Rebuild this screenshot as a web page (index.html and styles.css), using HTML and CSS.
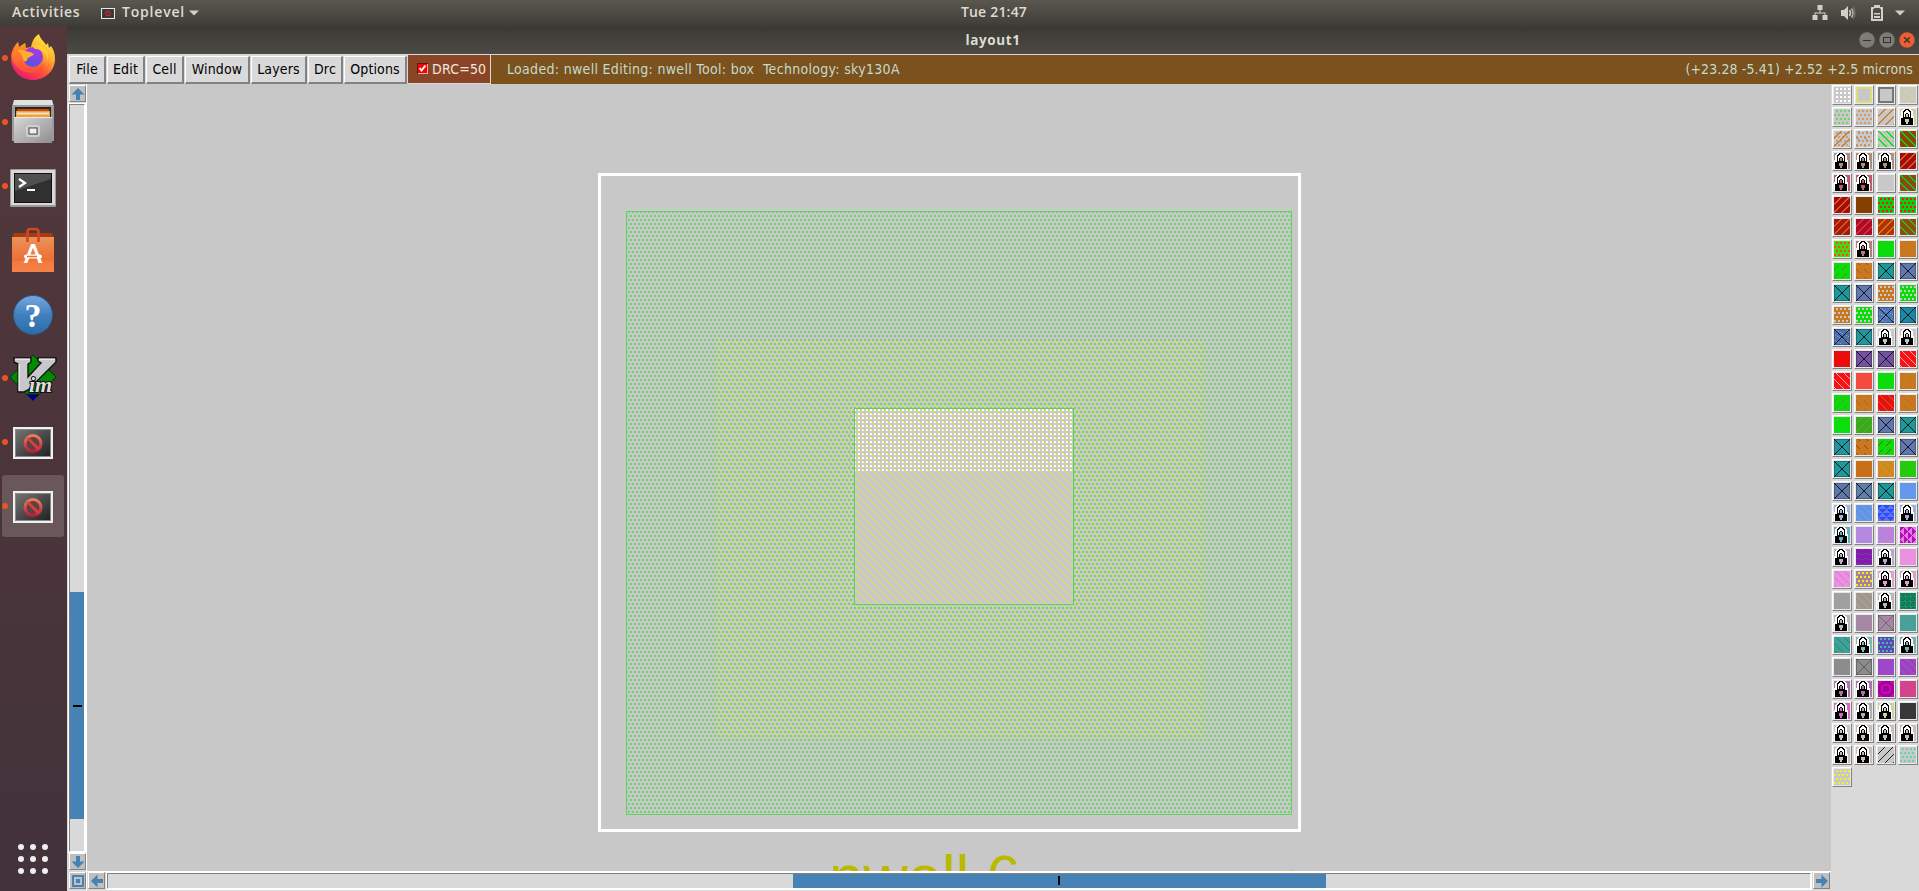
FILE: index.html
```html
<!DOCTYPE html>
<html lang="en">
<head>
<meta charset="utf-8">
<title>layout1</title>
<link rel="stylesheet" href="styles.css">
</head>
<body>
<header class="topbar">
  <div class="top-left">
    <span class="activities">Activities</span>
    <svg class="app-icon" width="14" height="11" viewBox="0 0 14 11"><rect x=".5" y=".5" width="13" height="10" fill="#3a3a3a" stroke="#e8e8e8"/><circle cx="7" cy="5.5" r="2.3" fill="#5a2020" stroke="#c8323c"/><path d="M5.2 3.7l3.6 3.6" stroke="#c8323c"/></svg>
    <span class="app-name">Toplevel</span>
    <svg class="caret" width="10" height="6" viewBox="0 0 10 6"><path d="M0 .5h10L5 5.5z" fill="#cfcec9"/></svg>
  </div>
  <div class="clock">Tue 21:47</div>
  <div class="tray">
    <svg width="16" height="16" viewBox="0 0 16 16" fill="#d0cfca"><path d="M5.500 0h5v5h-5zM.5 10h5v5h-5zM10.500 10h5v5h-5zM7.500 5h1v2.500h5V10h-1V8.500h-9V10h-1V7.500h5z"/></svg>
    <svg width="16" height="16" viewBox="0 0 16 16"><path d="M1 5h3l4-4v14l-4-4H1z" fill="#d0cfca"/><path d="M9.500 5q2 3 0 6" fill="none" stroke="#d0cfca" stroke-width="1.500"/><path d="M11.500 3.500q3 4.500 0 9" fill="none" stroke="#b5b4af" stroke-width="1.500"/><path d="M13.300 2q3.200 6 0 12" fill="none" stroke="#777670" stroke-width="1.200"/></svg>
    <svg width="12" height="16" viewBox="0 0 12 16"><path d="M3 0h6v2h3v14H0V2h3zM2 4.500V14h8V4.500L8.500 3h-5z" fill="#d0cfca" fill-rule="evenodd"/><path d="M3 8h6v1.500H3zM3 11h6v2H3z" fill="#d0cfca"/></svg>
    <svg width="10" height="6" viewBox="0 0 10 6"><path d="M0 .5h10L5 5.500z" fill="#cfcec9"/></svg>
  </div>
</header>
<div class="desktop">
  <nav class="dock">
    <div class="dock-item h-firefox run">
      <svg width="46" height="48" viewBox="0 0 46 48">
        <defs>
          <linearGradient id="fx" x1=".8" y1="0" x2=".2" y2="1"><stop offset="0" stop-color="#fff04a"/><stop offset=".35" stop-color="#ffb02c"/><stop offset=".65" stop-color="#ff5038"/><stop offset="1" stop-color="#e8107c"/></linearGradient>
          <linearGradient id="fo" x1="0" y1="0" x2="0" y2="1"><stop offset="0" stop-color="#ff9820"/><stop offset="1" stop-color="#ff4a40"/></linearGradient>
          <linearGradient id="fp" x1=".6" y1="0" x2=".3" y2="1"><stop offset="0" stop-color="#b434e8"/><stop offset="1" stop-color="#4c58e0"/></linearGradient>
        </defs>
        <path d="M29 1c1 5 5 7 7 11l2-2 1 5 2-2c3 4 4 8 4 13 0 12-10 21-22 21S1 38 1 25c0-7 3-12 7-16l1 5 6-4 1 5 5-1c1-5 3-10 8-13z" fill="url(#fx)"/>
        <path d="M2 20l6-11 1 6 6-5 1 6 6 0-5 8c0 9 12 12 18 6-3 9-15 13-24 7C5 32 1 28 2 20z" fill="url(#fo)"/>
        <path d="M22 13c11-3 19 7 15 17 2-8-2-12-7-13z" fill="#ffd83a"/>
        <circle cx="23" cy="24" r="10" fill="url(#fp)"/>
        <path d="M7 17c6-1 8 2 13 2l4 2c-2 3-6 2-7 6-1 3-4 1-4-1-1-4-3-7-6-9z" fill="#ffad28"/>
        <path d="M22 13c5-1 10 2 12 7-3-3-5-4-9-4z" fill="#ffc52e"/>
      </svg>
    </div>
    <div class="dock-item h-files run">
      <svg width="42" height="46" viewBox="0 0 42 46">
        <defs><linearGradient id="fl" x1="0" y1="0" x2="1" y2="1"><stop offset="0" stop-color="#d8d8d8"/><stop offset="1" stop-color="#8e8e8e"/></linearGradient></defs>
        <path d="M2 1h38l2 6v35H0V7z" fill="#9b9b9b"/><path d="M2 1h38l1 5H1z" fill="#e0e0e0"/>
        <rect x="3" y="8" width="36" height="11" fill="#252525"/><path d="M5 10h32v3H5z" fill="#c44a12"/><path d="M4 12h34v6H4z" fill="#f0a040"/><path d="M5 13.500h32v2H5z" fill="#f6e3c0"/>
        <rect x="2" y="18" width="38" height="26" fill="url(#fl)"/><path d="M2 18.500h38" stroke="#ececec"/>
        <rect x="15" y="27" width="12" height="10" rx="1.500" fill="none" stroke="#cfcfcf" stroke-width="2"/><rect x="17" y="29" width="8" height="6" fill="#eee" stroke="#505050"/>
      </svg>
    </div>
    <div class="dock-item h-term run">
      <svg width="46" height="38" viewBox="0 0 46 38">
        <rect width="46" height="38" rx="1" fill="#9a9a9a"/><rect x="1" y="1" width="44" height="35" fill="#d8d8d8"/><rect x="4" y="4" width="38" height="30" fill="#111"/><rect x="5" y="5" width="36" height="28" fill="#303030"/><path d="M5 5h36v5L5 22z" fill="#505050"/>
        <path d="M9 10l6 4-6 4" fill="none" stroke="#fff" stroke-width="2.200"/><path d="M17 21h8" stroke="#fff" stroke-width="2"/>
      </svg>
    </div>
    <div class="dock-item h-soft">
      <svg width="42" height="46" viewBox="0 0 42 46">
        <defs><linearGradient id="sf" x1="0" y1="0" x2="0" y2="1"><stop offset="0" stop-color="#e8935c"/><stop offset=".65" stop-color="#ee6f32"/><stop offset=".7" stop-color="#f47a3c"/><stop offset="1" stop-color="#f4824a"/></linearGradient></defs>
        <path d="M2 6h38l2 5H0z" fill="#a83a12"/><rect y="10" width="42" height="35" fill="url(#sf)"/>
        <path d="M15.500 15V5q0-3 3-3h5q3 0 3 3v10" fill="none" stroke="#d2481c" stroke-width="2.600"/>
        <text x="21" y="36" text-anchor="middle" class="soft-a">A</text><path d="M14 29.500h14" stroke="#fff" stroke-width="4" stroke-linecap="round"/><path d="M15 29.500h10" stroke="#ee6f32" stroke-width="1.500"/>
      </svg>
    </div>
    <div class="dock-item h-help">
      <svg width="42" height="42" viewBox="0 0 42 42">
        <defs><linearGradient id="hp" x1="0" y1="0" x2="0" y2="1"><stop offset="0" stop-color="#78a8de"/><stop offset=".5" stop-color="#4080c0"/><stop offset="1" stop-color="#2c6ca4"/></linearGradient></defs>
        <circle cx="21" cy="21" r="19.500" fill="url(#hp)" stroke="#2a5a8c"/><text x="21" y="33" text-anchor="middle" class="help-q">?</text>
      </svg>
    </div>
    <div class="dock-item h-vim run">
      <svg width="48" height="48" viewBox="0 0 48 48">
        <path d="M24 1l23 22-23 24L1 23z" fill="#000080"/><path d="M24 1l23 22-16 17H17L1 23z" fill="#008a00" stroke="#003800"/>
        <path d="M5 4h17v4l-3 2v13L32 9l-3-2V4h18v4L19 36l-4 2H9V10L5 8z" fill="#c8c8cc" stroke="#111" stroke-width="1.400"/>
        <path d="M6 5h15M30 5h16M10 10v27" stroke="#fff"/>
        <text x="20" y="38" class="vim-im">im</text>
      </svg>
    </div>
    <div class="dock-item h-win run">
      <svg width="40" height="32" viewBox="0 0 40 32"><use href="#winicon"/></svg>
    </div>
    <div class="dock-item h-win run active">
      <svg width="40" height="32" viewBox="0 0 40 32">
        <defs>
          <linearGradient id="wg" x1="0" y1="0" x2="1" y2="1"><stop offset="0" stop-color="#747474"/><stop offset="1" stop-color="#222"/></linearGradient>
          <linearGradient id="wr" x1="0" y1="0" x2="0" y2="1"><stop offset="0" stop-color="#e88058"/><stop offset="1" stop-color="#c01c3c"/></linearGradient>
          <g id="winicon"><rect x="1" y="1" width="38" height="30" fill="#888" stroke="#f0f0f0" stroke-width="2"/><rect x="3" y="3" width="34" height="26" fill="url(#wg)"/><circle cx="20" cy="16.500" r="8" fill="#5c4244" stroke="url(#wr)" stroke-width="3"/><path d="M14.500 11l11 11" stroke="#d64040" stroke-width="3"/></g>
        </defs>
        <use href="#winicon"/>
      </svg>
    </div>
    <svg class="apps" width="32" height="32" viewBox="0 0 32 32" fill="#eee"><circle cx="4" cy="4" r="3"/><circle cx="16" cy="4" r="3"/><circle cx="28" cy="4" r="3"/><circle cx="4" cy="16" r="3"/><circle cx="16" cy="16" r="3"/><circle cx="28" cy="16" r="3"/><circle cx="4" cy="28" r="3"/><circle cx="16" cy="28" r="3"/><circle cx="28" cy="28" r="3"/></svg>
  </nav>
  <main class="window">
    <div class="titlebar">
      <span class="title">layout1</span>
      <div class="win-buttons">
        <svg width="16" height="16" viewBox="0 0 16 16"><circle cx="8" cy="8" r="7.700" fill="#7d7c75"/><path d="M4 8.500h8" stroke="#32312e"/></svg>
        <svg width="16" height="16" viewBox="0 0 16 16"><circle cx="8" cy="8" r="7.700" fill="#7d7c75"/><rect x="4.500" y="5.500" width="7" height="5" fill="none" stroke="#32312e"/></svg>
        <svg width="16" height="16" viewBox="0 0 16 16"><circle cx="8" cy="8" r="7.700" fill="#ec5f33"/><path d="M5.200 5.200l5.600 5.600M10.800 5.200l-5.600 5.600" stroke="#32312e" stroke-width="1.300"/></svg>
      </div>
    </div>
    <div class="menubar">
      <div class="menus">
        <button class="menu w-file">File</button><button class="menu w-edit">Edit</button><button class="menu w-cell">Cell</button><button class="menu w-window">Window</button><button class="menu w-layers">Layers</button><button class="menu w-drc">Drc</button><button class="menu w-options">Options</button>
      </div>
      <div class="drc"><svg width="11" height="11" viewBox="0 0 11 11"><rect width="11" height="11" fill="#e8b0a8"/><path d="M0 0h11v1H1v10H0z" fill="#5c1c10"/><rect x="1" y="1" width="9" height="9" fill="#f00"/><path d="M2.500 5l2 2.500 4-5" fill="none" stroke="#fff" stroke-width="2"/></svg><span>DRC=50</span></div>
      <div class="status"><span class="status-text">Loaded: nwell Editing: nwell Tool: box&nbsp; Technology: sky130A</span><span class="coords">(+23.28 -5.41) +2.52 +2.5 microns</span></div>
    </div>
    <div class="work">
      <div class="vscroll">
        <div class="sbtn"><svg width="14" height="14" viewBox="0 0 14 14"><path d="M7 1l6.500 6.500H9V13H5V7.500H.5z"/></svg></div>
        <div class="vtrough"><div class="vthumb"><i></i></div></div>
        <div class="sbtn"><svg width="14" height="14" viewBox="0 0 14 14"><path d="M7 13l6.500-6.500H9V1H5v5.500H.5z"/></svg></div>
        <div class="sbtn corner"><svg width="14" height="14" viewBox="0 0 14 14"><path fill-rule="evenodd" d="M1 1h12v12H1zM3 3v8h8V3zM5 5h4v4H5z"/></svg></div>
      </div>
      <div class="center">
        <svg class="canvas" width="1744" height="787" viewBox="87 84 1744 787" shape-rendering="crispEdges">
          <defs>
            <pattern id="nwell" width="4" height="8" patternUnits="userSpaceOnUse"><path d="M0 3h2v2H0zM2 7h2v1H2zM2 0h2v1H2z" fill="#5fd75f"/></pattern>
            <pattern id="hatch" width="8" height="8" patternUnits="userSpaceOnUse"><path d="M2 0h1v1h-1zM3 1h1v1h-1zM4 2h1v1h-1zM5 3h1v1h-1zM6 4h1v1h-1zM7 5h1v1h-1zM0 6h1v1h-1zM1 7h1v1h-1z" fill="#ebe53c"/></pattern>
            <pattern id="grid" width="4" height="4" patternUnits="userSpaceOnUse"><path d="M2 1h2v2H2z" fill="#fff"/></pattern>
          </defs>
          <rect x="599.500" y="174.500" width="700" height="656" fill="none" stroke="#fff" stroke-width="3"/>
          <path d="M715 339h491v401H715zM854 408v197h220V408z" fill="url(#hatch)" fill-rule="evenodd"/>
          <path d="M626 211h666v604H626zM854 408v197h220V408z" fill="url(#nwell)" fill-rule="evenodd" fill-opacity=".88"/>
          <rect x="626.500" y="211.500" width="665" height="603" fill="none" stroke="#5fd75f"/>
          <rect x="855" y="409" width="218" height="62" fill="url(#grid)"/>
          <rect x="855" y="409" width="218" height="195" fill="url(#hatch)"/>
          <rect x="854.500" y="408.500" width="219" height="196" fill="none" stroke="#50d850"/>
          <rect x="1291" y="870" width="1" height="1" fill="#5fd75f"/>
          <text x="829" y="898" class="rule">nwell.6</text>
        </svg>
        <div class="hscroll">
          <div class="sbtn"><svg width="14" height="14" viewBox="0 0 14 14"><path d="M1 7l6.500-6.500V5H13v4H7.500v4.500z"/></svg></div>
          <div class="htrough"><div class="hthumb"><i></i></div></div>
          <div class="sbtn"><svg width="14" height="14" viewBox="0 0 14 14"><path d="M13 7L6.500.5V5H1v4h5.500v4.500z"/></svg></div>
        </div>
      </div>
      <aside class="layers" id="layers"></aside>
    </div>
  </main>
</div>
<script src="layers.js"></script>
</body>
</html>
```

FILE: styles.css
```css
* { box-sizing: border-box; }
body { margin: 0; width: 1919px; height: 891px; overflow: hidden; display: flex; flex-direction: column; font-family: "DejaVu Sans", sans-serif; background: #d9d9d9; }
svg { display: block; flex: none; }

.topbar { height: 26px; flex: none; display: grid; grid-template-columns: 1fr 200px 1fr; padding-left: 69px; align-items: center; background: linear-gradient(#5a574e, #3e3d38); color: #dfdbd2; font: 600 14px/24px "Open Sans", sans-serif; }
.topbar span, .clock { padding-bottom: 2px; }
.top-left { display: flex; align-items: center; margin-left: -57px; }
.activities { width: 89px; letter-spacing: .7px; }
.app-name { margin: 0 4px 0 7px; letter-spacing: .8px; }
.clock { text-align: center; letter-spacing: .2px; }
.tray { display: flex; align-items: center; justify-content: flex-end; padding-right: 14px; gap: 12px; }
.tray svg:nth-child(2) { margin-right: 3px; }

.desktop { flex: 1; display: flex; min-height: 0; }
.dock { width: 67px; flex: none; display: flex; flex-direction: column; align-items: center; padding-right: 2px; background: linear-gradient(#53383b, #42323a); }
.dock-item { width: 62px; height: 64px; flex: none; display: flex; align-items: center; justify-content: center; position: relative; border-radius: 3px; }
.dock-item.run::before { content: ""; position: absolute; left: 0; top: 29px; width: 6px; height: 6px; border-radius: 50%; background: #e95420; }
.dock-item.active { height: 62px; background: #695759; margin-top: 1px; }
.dock-item.active::before { top: 28px; }
.h-firefox svg { margin-bottom: 3px; }
.h-term svg { margin-top: 4px; }
.h-help svg, .h-win svg { margin-top: 2px; }
.apps { margin-top: auto; margin-bottom: 16px; }
.soft-a { font: 700 26px "Lato", sans-serif; fill: #fff; }
.help-q { font: 700 34px "Liberation Serif", serif; fill: #fff; }
.vim-im { font: italic 700 22px "Liberation Serif", serif; fill: #ddd; stroke: #111; stroke-width: 2px; paint-order: stroke; }

.window { flex: 1; min-width: 0; display: flex; flex-direction: column; }
.titlebar { height: 28px; flex: none; background: linear-gradient(#3a3934, #4b4a44); display: grid; grid-template-columns: 1fr 200px 1fr; align-items: center; color: #dfdbd2; font: 700 13.500px/28px "Open Sans", sans-serif; }
.title { grid-column: 2; text-align: center; letter-spacing: .6px; }
.win-buttons { display: flex; justify-content: flex-end; gap: 4px; padding-right: 4px; }
.menubar { height: 30px; flex: none; display: flex; border-top: 1px solid #d9d9d9; font: condensed 14px/26px "DejaVu Sans Condensed", "DejaVu Sans", sans-serif; }
.menus { display: flex; gap: 1px; padding: 1px 1px 0 2px; background: #d9d9d9; }
.menu { height: 28px; border: 2px solid; border-color: #fff #828282 #828282 #fff; border-left-width: 1px; border-top-width: 1px; background: #d9d9d9; padding: 0 0 1px; font: inherit; line-height: 24px; letter-spacing: .15px; color: #000; text-align: center; }
.w-file { width: 37px; } .w-edit { width: 38px; } .w-cell { width: 38px; } .w-window { width: 65px; } .w-layers { width: 56px; } .w-drc { width: 35px; } .w-options { width: 63px; }
.drc { width: 83px; background: #8a4526; color: #f2e6de; display: flex; align-items: center; gap: 4px; padding: 0 0 1px 9px; border: 1px solid #d9d9d9; border-width: 0 1px 1px 0; letter-spacing: .2px; }
.status { flex: 1; display: flex; justify-content: space-between; align-items: center; background: #7b511e; color: #c4dccb; padding: 0 6px 2px 16px; }
.status-text { letter-spacing: .31px; }
.coords { letter-spacing: .11px; }

.work { flex: 1; display: flex; min-height: 0; }
.vscroll { width: 20px; flex: none; background: #d9d9d9; padding: 1px 1px 1px 2px; display: flex; flex-direction: column; border-right: 1px solid #fff; }
.sbtn { width: 17px; height: 17px; flex: none; background: #bfbfbf; border: 1px solid; border-color: #fff #828282 #828282 #fff; display: flex; align-items: center; justify-content: center; fill: #4682b4; }
.vtrough { width: 16px; flex: 1; margin: 2px 0 1px; border: 1px solid; border-color: #828282 #fff #fff #828282; box-shadow: 0 0 0 1px #fff; }
.vthumb { height: 227px; margin-top: 487px; background: #4682b4; display: flex; align-items: center; justify-content: center; }
.vthumb i { width: 9px; height: 2px; background: #000; }
.corner { margin: 2px 0 1px; }
.center { width: 1744px; flex: none; display: flex; flex-direction: column; }
.canvas { background: #c8c8c8; }
.rule { font: 61.500px "Liberation Sans", sans-serif; fill: #b9b900; }
.hscroll { height: 20px; background: #d9d9d9; display: flex; align-items: center; gap: 2px; border-top: 1px solid #fff; padding: 0 1px 2px 1px; }
.htrough { flex: 1; height: 16px; border: 1px solid; border-color: #828282 #fff #fff #828282; box-shadow: 0 0 0 1px #fff; }
.hthumb { width: 533px; height: 14px; margin-left: 685px; background: #4682b4; display: flex; align-items: center; justify-content: center; }
.hthumb i { width: 2px; height: 9px; margin-right: 1px; background: #000; }
.layers { flex: 1; background: #d9d9d9; display: grid; grid-template-columns: repeat(4, 20px); grid-auto-rows: 20px; gap: 2px; padding: 1px 0 0 1px; align-content: start; }
.layer { border: 1px solid; border-color: #fff #828282 #828282 #fff; background: #e8e8e8; padding: 1px; }
```

FILE: layers.js
```js
// Layer palette: each entry is [kind, background, foreground, secondary]
const O = '#c87820', G = '#0cdc0c', C = '#c8c8c8', T = '#209898', B = '#6078ac', K = '#101820';
const palette = [
  ['grid', C, '#fff'], ['frame', C, '#dcdc78'], ['frame', C, '#787878'], ['back', C, '#e6e046'],
  ['dots', C, '#68d868'], ['dots', C, '#cc9c70'], ['slash2', C, '#cc8038'], ['lock', '#d0d0a8'],
  ['slash2', C, '#cc8038', '#c8a080'], ['sparseb', C, '#b07040', '#cc9c70'], ['back2', C, '#20d820', '#90d890'], ['back2', '#8c4408', '#10d010'],
  ['lock', '#b08c7c'], ['lock', '#b08c7c'], ['lock', '#a89478'], ['slash2', '#a40c10', '#d86018'],
  ['lock', '#c05c6c'], ['lock', '#c05c6c'], ['solid', C], ['back2', '#8c4810', '#10c818'],
  ['slash2', '#a40c10', '#d86018'], ['solid', '#844000'], ['dots', '#08d010', '#e82010'], ['dots', '#08d010', '#e82010'],
  ['slash2', '#a81810', '#c86418'], ['slash2', '#b00828', '#d03838'], ['slash2', '#b43008', '#d08010'], ['back2', '#904c10', '#38b420'],
  ['dots', '#48d810', '#f05020'], ['lock', '#b07c7c'], ['solid', G], ['solid', O],
  ['sparse', G, '#508c10'], ['sparseb', O, '#a05c20'], ['cross', T, K], ['cross', B, K],
  ['cross', T, K], ['cross', B, K], ['dots', O, C], ['dots', G, C],
  ['dots', O, C, '#a05c20'], ['dots', G, C, '#e04040'], ['cross', '#5078b8', K, '#80a0e0'], ['cross', '#1888a0', K, '#4880d8'],
  ['cross', '#5070ac', K, '#80a0e0'], ['cross', T, K, '#4880d8'], ['lock', C], ['lock', C],
  ['solid', '#ec0c0c'], ['cross', '#7850a0', K], ['cross', '#7850a0', K, '#6060b8'], ['back', '#fc1010', '#d0b8d0'],
  ['back', '#fc1010', '#d0b8d0'], ['solid', '#f44a40'], ['solid', G], ['sparseb', O, '#bd701c'],
  ['sparse', '#10d810', '#50a018'], ['sparseb', O, '#a86820'], ['back', '#e81010', '#c86818'], ['back', O, '#bd701c'],
  ['solid', '#0ce00c'], ['slash', '#3ca820', '#40c020'], ['cross', B, K], ['cross', T, K],
  ['cross', T, K, '#4880d8'], ['sparseb', O, '#904800'], ['sparse', G, '#904800'], ['cross', B, K],
  ['cross', T, K], ['solid', '#c87018'], ['back', '#d08c20', '#cc8018'], ['slash', '#24cc0c', '#30c010'],
  ['cross', '#6078a8', K], ['cross', '#6080a8', K], ['cross', T, K], ['solid', '#6498ec'],
  ['lock', '#a0b4e0'], ['back', '#6498e8', '#6884c0'], ['tri', '#0c5cff', '#8068e8'], ['lock', '#a0b0d8'],
  ['lock', '#60b0c0'], ['solid', '#b488e0'], ['back', '#b884e0', '#c878b8'], ['tri2', '#b010b8', '#e878e8'],
  ['lock', '#c0a8d0'], ['wave', '#8818b0', '#6840a0'], ['lock', '#b8a8d0'], ['solid', '#ec90e0'],
  ['back', '#ec90e4', '#d878c0'], ['dots', '#a880a0', '#f0f010'], ['lock', '#e0a0c8'], ['lock', '#e0a0c8'],
  ['solid', '#a0a0a0'], ['back', '#a09c98', '#b08050'], ['lock', '#b8b8b8'], ['noise', '#0c7840', '#1c8c74'],
  ['lock', '#b8b8b8'], ['solid', '#a488a4'], ['cross', '#a488a4', '#706470'], ['solid', '#48a098'],
  ['back', '#40a098', '#308078'], ['lock', '#80b8b8'], ['dots', '#5848b8', '#48b8a8'], ['lock', '#78b0b0'],
  ['solid', '#8c8c8c'], ['cross', '#8c8c8c', '#606060'], ['solid', '#9c48c8'], ['back', '#9c48c8', '#a03090'],
  ['lock', '#b070b0'], ['lock', '#b070b0'], ['ring', '#a000b0', '#c81090'], ['solid', '#d44488'],
  ['lock', '#d868c0'], ['lock', '#b0b0b0'], ['lock', '#d0d0a0'], ['solid', '#383838'],
  ['lock', C], ['lock', '#c8c0b8'], ['lock', '#c8c0b8'], ['lock', '#c8c0b8'],
  ['lock', '#c8c0b8'], ['lock', '#c8c0b8'], ['slash', C, '#202020'], ['dots', C, '#60d8a8'],
  ['dots', C, '#f0f030']
];

const mod = (a, n) => ((a % n) + n) % n;
const tests = {
  grid: (x, y) => mod(x, 4) > 1 && mod(y - 1, 4) < 2,
  dots: (x, y) => mod(y - 1, 4) < 2 && mod(x + (mod(y - 1, 8) < 4 ? 2 : 0), 4) < 2,
  slash: (x, y) => mod(x + y, 8) === 6,
  back: (x, y) => mod(x - y, 8) === 2,
  slash2: (x, y) => mod(x + y, 8) > 5,
  back2: (x, y) => mod(x - y, 8) < 2,
  sparse: (x, y) => mod(x + y, 8) === 6 && mod(x, 8) < 5,
  sparseb: (x, y) => mod(x - y, 8) === 2 && mod(x, 8) < 4,
  cross: (x, y) => x === y || x + y === 15,
  frame: (x, y) => x < 2 || y < 2 || x > 13 || y > 13,
  tri: (x, y) => Math.abs(mod(x + (mod(y, 8) < 4 ? 0 : 4), 8) - 4) <= mod(y, 4),
  tri2: (x, y) => Math.abs(mod(y + (mod(x, 8) < 4 ? 0 : 4), 8) - 4) <= mod(x, 4),
  wave: (x, y) => mod(y + (mod(x, 8) < 4 ? 1 : 0), 5) === 0,
  noise: (x, y) => mod(x * 7 + y * 5 + x * y, 5) < 2,
  ring: (x, y) => { const d = mod(Math.round(Math.hypot(x - 7.5, y - 7.5)), 5); return d === 4 || d === 0; },
  dust: (x, y) => mod(x * 3 + y * 5, 11) === 0
};
function pixels(test, color) {
  let d = '';
  for (let y = 0; y < 16; y++) for (let x = 0; x < 16; x++) if (test(x, y)) d += `M${x} ${y}h1v1h-1z`;
  return `<path d="${d}" fill="${color}"/>`;
}
function lock(bg) {
  return `<path d="M1 16V7h1V2h1V1h1V0h8v1h1v1h1v5h1v9z" fill="#fff"/>
    <path d="M2 16V9h2V2h1V1h1V0h4v1h1v1h1v7h2v7z" fill="#000"/>
    <path d="M5 8V3h1V2h1V1h2v1h1v1h1v5z" fill="#fff"/>
    <path d="M6 8V5h1V4h2v1h1v3z" fill="#000"/><path d="M7 5h2v3H7z" fill="${bg}"/>
    <path d="M6 10h4v3H9v2H7v-2H6z" fill="${bg}"/>`;
}
document.getElementById('layers').innerHTML = palette.map(([kind, bg, fg, extra]) => {
  let art = `<rect width="16" height="16" fill="${bg}"/>`;
  if (extra) art += pixels(kind === 'cross' ? tests.dust : tests.dots, extra);
  if (kind === 'lock') art += `<g transform="translate(-1 0)">${lock(bg)}</g>`;
  else if (kind !== 'solid') art += pixels(tests[kind], fg);
  if (kind === 'cross') art += '<path d="M0 0h16v16H0zM1 1v14h14V1z" fill-rule="evenodd" fill="#000" opacity=".25"/>';
  return `<div class="layer"><svg width="16" height="16" viewBox="0 0 16 16" shape-rendering="crispEdges">${art}</svg></div>`;
}).join('');
```
